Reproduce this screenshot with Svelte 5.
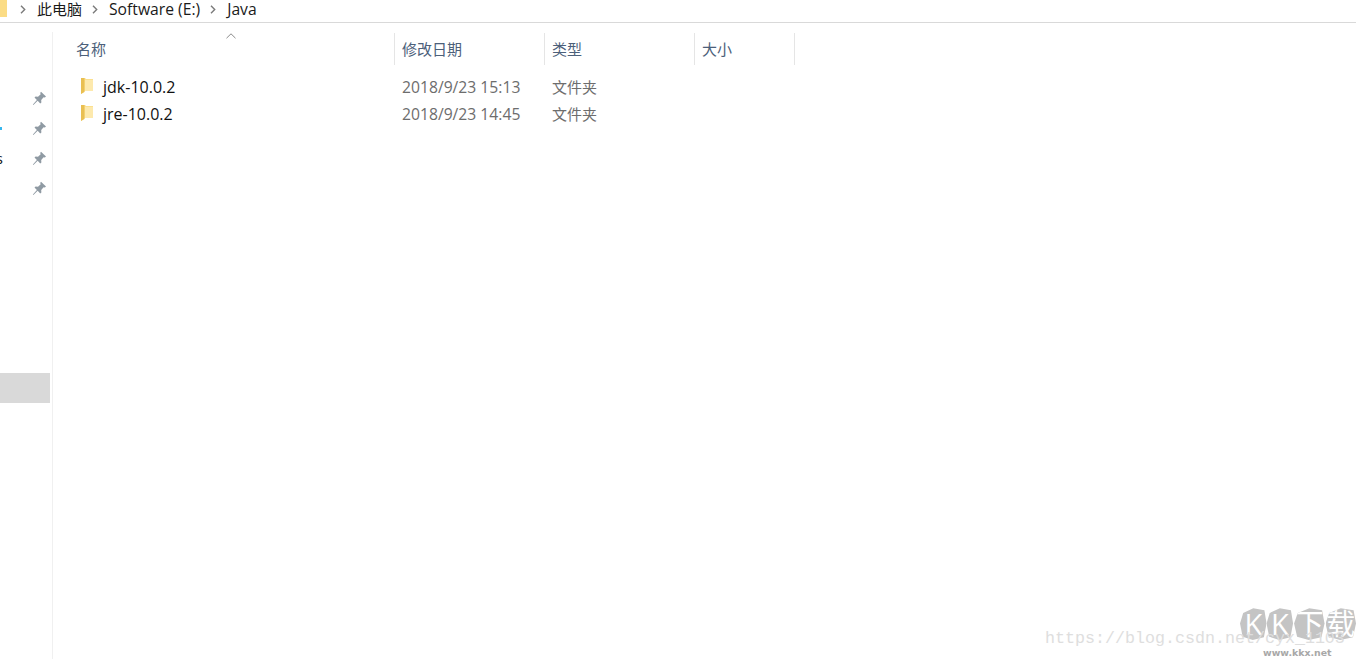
<script>
	const crumbs = [
		{ text: '此电脑', latin: false },
		{ text: 'Software (E:)', latin: true },
		{ text: 'Java', latin: true }
	];
	const columns = [
		{ label: '名称', width: 342 },
		{ label: '修改日期', width: 150 },
		{ label: '类型', width: 150 },
		{ label: '大小', width: 100 }
	];
	const files = [
		{ name: 'jdk-10.0.2', date: '2018/9/23 15:13', type: '文件夹' },
		{ name: 'jre-10.0.2', date: '2018/9/23 14:45', type: '文件夹' }
	];
	const quick = [
		{ text: '', mark: '' },
		{ text: '', mark: 'cyan' },
		{ text: 's', mark: '' },
		{ text: '', mark: '' }
	];
	const logo = ['K', 'K', '下', '载'];
</script>

{#snippet folder(cls)}
	<svg class={cls} width="14" height="17" viewBox="0 0 14 17">
		<path d="M1 1h4l1 1h7v12H5l-4 3z" fill="#fbe08f" />
		<path d="M1 1h3.5v14l-3.5 2z" fill="#e9bf52" />
		<path d="M5 3h8v11H5z" fill="#fde9ad" />
	</svg>
{/snippet}

<div class="window">
	<nav class="crumbs">
		<span class="root-folder"></span>
		{#each crumbs as crumb}
			<svg class="chevron" width="6" height="9" viewBox="0 0 6 9">
				<path d="M1 .8 4.7 4.5 1 8.2" fill="none" stroke="#7a7a7a" stroke-width="1.4" />
			</svg>
			<span class="crumb" class:latin={crumb.latin}>{crumb.text}</span>
		{/each}
	</nav>

	<div class="body">
		<aside class="quick">
			<div class="pins">
				{#each quick as item}
					<div class="pin-row">
						<span class="clipped" class:cyan={item.mark === 'cyan'}>{item.text}</span>
						<svg width="15" height="15" viewBox="0 0 15 15">
							<path
								d="M9 .8 14 5.6 12.8 6.6 11.6 6.2 9.2 9 9.4 11.4 8.2 12.4 5.7 9.8 1.4 14 .9 13.5 4.9 9 2.5 6.6 3.6 5.5 6 5.7 8.7 3.3 8.2 2Z"
								fill="#8f9aa3"
							/>
						</svg>
					</div>
				{/each}
			</div>
			<div class="selected"></div>
		</aside>

		<main class="list">
			<div class="sort">
				<svg width="10" height="6" viewBox="0 0 10 6">
					<path d="M.5 5.2 5 .8l4.5 4.4" fill="none" stroke="#8a8a8a" stroke-width="1" />
				</svg>
			</div>
			<header class="head">
				{#each columns as col}
					<div class="col" style:width="{col.width}px">{col.label}</div>
				{/each}
			</header>
			<div class="rows">
				{#each files as file}
					<div class="row">
						<div class="name">
							{@render folder('file-icon')}
							<span>{file.name}</span>
						</div>
						<div class="date">{file.date}</div>
						<div class="type">{file.type}</div>
					</div>
				{/each}
			</div>
		</main>
	</div>

	<div class="kkx">
		<div class="blobs">
			{#each logo as ch}
				<span>{ch}</span>
			{/each}
		</div>
		<div class="site">www.kkx.net</div>
	</div>
	<div class="csdn">https://blog.csdn.net/cyx_1103</div>
</div>

<style>
	:global(body) {
		margin: 0;
		background: #fff;
	}

	.window {
		position: relative;
		width: 1356px;
		height: 659px;
		overflow: hidden;
		background: #fff;
		font-family: 'Open Sans', 'Noto Sans CJK SC', sans-serif;
		font-size: 15px;
		color: #1a1a1a;
	}

	.crumbs {
		display: flex;
		align-items: center;
		height: 22px;
		border-bottom: 1px solid #d9d9d9;
	}

	.root-folder {
		width: 7px;
		height: 17px;
		margin: -5px 3px 0 0;
		flex: none;
		background: #fbdc85;
	}

	.chevron {
		margin: -3px 11px 0 10px;
		flex: none;
	}

	.crumb {
		line-height: 18px;
		margin-top: -4px;
		white-space: nowrap;
	}

	.crumb.latin {
		font-size: 15.7px;
	}

	.body {
		display: flex;
		height: 636px;
	}

	.quick {
		width: 52px;
		margin-top: 9px;
		border-right: 1px solid #f0f0f0;
		flex: none;
	}

	.pins {
		padding-top: 51px;
	}

	.pin-row {
		display: flex;
		justify-content: space-between;
		align-items: center;
		height: 30px;
		padding-right: 5px;
	}

	.clipped {
		margin-left: -7px;
		width: 10px;
		color: #111;
		font-size: 15px;
		text-align: right;
	}

	.cyan {
		height: 3px;
		width: 2px;
		margin-left: 0;
		background: #35b6ee;
	}

	.selected {
		width: 50px;
		height: 30px;
		margin-top: 170px;
		background: #d9d9d9;
	}

	.list {
		position: relative;
		flex: 1;
	}

	.sort {
		position: absolute;
		left: 173px;
		top: 10px;
		line-height: 0;
	}

	.head {
		display: flex;
		margin-top: 10px;
		height: 32px;
	}

	.col {
		box-sizing: border-box;
		padding-left: 7px;
		border-right: 1px solid #e5e5e5;
		color: #4c607a;
		line-height: 32px;
	}

	.col:first-child {
		padding-left: 23px;
	}

	.rows {
		margin-top: 8px;
	}

	.row {
		display: flex;
		align-items: center;
		height: 27px;
		color: #6d6d6d;
	}

	.name {
		display: flex;
		align-items: center;
		gap: 9px;
		width: 349px;
		padding-left: 27px;
		box-sizing: border-box;
		color: #111;
		font-size: 16px;
	}

	.name :global(.file-icon) {
		margin-top: -2px;
	}

	.date {
		width: 150px;
		font-size: 15.7px;
	}

	.csdn {
		position: absolute;
		left: 1045px;
		top: 627px;
		font-family: 'Liberation Mono', monospace;
		font-size: 16.67px;
		line-height: 24px;
		color: #dedede;
		white-space: nowrap;
	}

	.kkx {
		position: absolute;
		left: 1240px;
		top: 607px;
		width: 116px;
	}

	.blobs {
		display: flex;
	}

	.blobs span {
		width: 27px;
		height: 33px;
		clip-path: polygon(12% 18%, 50% 4%, 92% 10%, 100% 50%, 90% 92%, 48% 100%, 10% 90%, 0 50%);
		background: #c4c4c4;
		color: #fff;
		font-size: 29px;
		line-height: 33px;
		text-align: center;
	}

	.blobs span:nth-child(n + 3) {
		width: 31px;
		margin-left: 1px;
	}

	.site {
		margin-top: 7px;
		padding-left: 23px;
		font-family: 'DejaVu Sans', sans-serif;
		font-size: 9.4px;
		font-weight: 700;
		line-height: 12px;
		color: #a8a8a8;
	}
</style>
